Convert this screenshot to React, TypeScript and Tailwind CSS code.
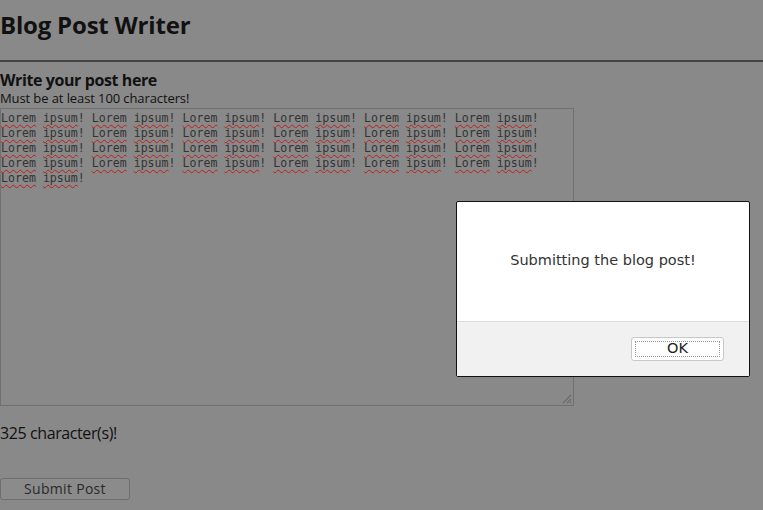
const REPS = 25;

function Word({ children }: { children: string }) {
  return (
    <span className="underline decoration-wavy decoration-[#c41a1a] decoration-1 underline-offset-[2px]">
      {children}
    </span>
  );
}

export default function App() {
  return (
    <div className="relative min-h-[510px] w-full overflow-hidden bg-[#898989] font-['Open_Sans',sans-serif] text-[#111]">
      <h1 className="pt-[9px] text-[24px] font-bold leading-[32px] tracking-[-0.2px]">Blog Post Writer</h1>
      <hr className="mt-[19px] border-0 border-t-2 border-[#454545]" />

      <h2 className="mt-[8px] text-[16px] font-bold leading-[20px] tracking-[-0.4px]">Write your post here</h2>
      <p className="text-[13px] leading-[17px] tracking-[-0.1px]">Must be at least 100 characters!</p>

      {/* fake textarea so the spell-check squiggles show */}
      <div className="relative mt-[1px] h-[298px] w-[574px] border border-[#707070] pt-[2px] font-['DejaVu_Sans_Mono',monospace] text-[11.6px] leading-[15px] text-[#333] whitespace-pre-wrap">
        {Array.from({ length: REPS }).map((_, i) => (
          <span key={i}>
            <Word>Lorem</Word> <Word>ipsum</Word>!{' '}
          </span>
        ))}
        <svg className="absolute bottom-[1px] right-[1px]" width="12" height="12" viewBox="0 0 12 12">
          <path d="M11 3L3 11M11 7L7 11M11 10L10 11" stroke="#6c6c6c" strokeWidth="1.4" />
        </svg>
      </div>

      <p className="mt-[16px] text-[16px] leading-[22px] tracking-[-0.4px]">325 character(s)!</p>

      <button className="mt-[34px] h-[22px] w-[130px] rounded-[3px] border border-[#6e6e6e] bg-[#8b8b8b] text-[14px] leading-[20px] tracking-[0.3px] text-[#2a2a2a]">
        Submit Post
      </button>

      {/* alert dialog */}
      <div className="absolute left-[456px] top-[201px] flex h-[176px] w-[294px] flex-col overflow-hidden rounded-[2px] border border-[#111] bg-white font-['DejaVu_Sans',sans-serif]">
        <div className="flex flex-1 items-center justify-center pb-[2px] text-[14.5px] text-[#333]">
          Submitting the blog post!
        </div>
        <div className="flex h-[55px] items-center justify-end border-t border-[#ddd] bg-[#f1f1f1] pr-[25px]">
          <button className="flex h-[24px] w-[93px] items-center justify-center rounded-[3px] border border-[#c8c8c8] bg-white p-[3px]">
            <span className="flex h-full w-full items-center justify-center border border-dotted border-[#999] text-[14.5px] text-[#222]">
              OK
            </span>
          </button>
        </div>
      </div>
    </div>
  );
}
